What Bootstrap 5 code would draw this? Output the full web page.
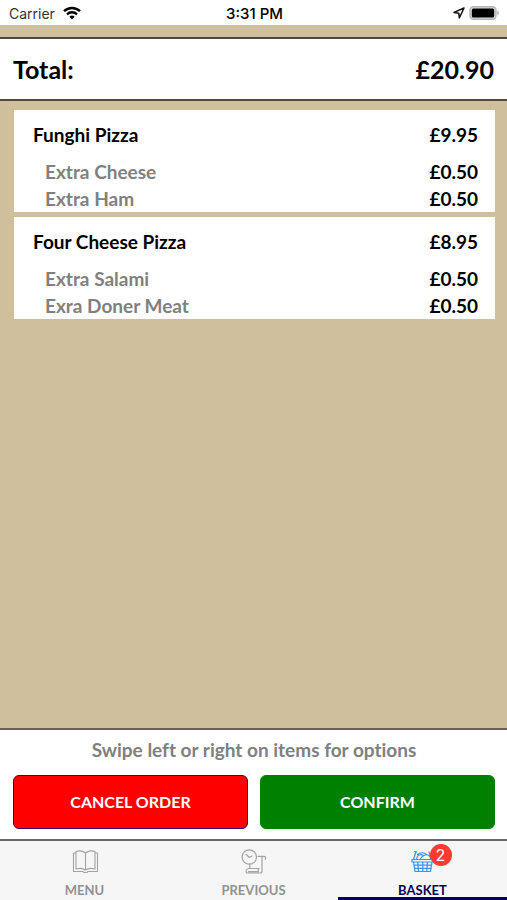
<!DOCTYPE html>
<html lang="en">
<head>
<meta charset="utf-8">
<meta name="viewport" content="width=device-width, initial-scale=1">
<title>Basket</title>
<link rel="stylesheet" href="https://cdn.jsdelivr.net/npm/bootstrap@5.3.0/dist/css/bootstrap.min.css">
<style>
body { font-family: Lato, "Open Sans", sans-serif; font-variant-ligatures: none; background: #d0bf9d; color: #000; font-weight: 700; }
.status-bar { height: 25px; font: 500 14px/25px Inter, "Liberation Sans", sans-serif; padding: 1px 7px 0 9px; }
.status-carrier { font-weight: 400; color: #333; }
.status-time { font-size: 15px; }
.total-bar { margin-top: 12px; border-top: 2px solid #50483f; border-bottom: 2px solid #50483f; padding: 0 13px; font-size: 25px; line-height: 60px; }
.order-list { padding: 9px 12px 9px 14px; gap: 5px; }
.order-item { padding: 11px 17px 0 19px; font-size: 19px; line-height: 28px; }
.order-item .order-name { margin-bottom: 9px; }
.order-extra { padding-left: 12px; line-height: 27px; }
.order-extra dt { color: #808080; }
.actions { border-top: 2px solid #666059; border-bottom: 2px solid #666; padding: 7px 12px 10px 13px; }
.hint { color: #808080; font-size: 19px; line-height: 26px; margin-bottom: 12px; }
.action-row { gap: 12px; }
.btn-order { height: 54px; border-radius: 6px; font-size: 16px; font-weight: 700; color: #fff; }
.btn-cancel, .btn-cancel:hover { background: #f00; border: 1px solid #3c0064; color: #fff; }
.btn-confirm, .btn-confirm:hover { background: #008000; border: 1px solid #008000; color: #fff; }
.tab-bar { background: #f6f6f6; }
.tab-bar a { height: 59px; padding-top: 7px; border-bottom: 3px solid transparent; color: #929292; font-size: 13px; line-height: 16px; text-decoration: none; }
.tab-bar a.active { color: #080058; border-color: #080058; }
.tab-icon { width: 28px; height: 28px; margin-bottom: 6px; }
.tab-icon svg { display: block; }
.tab-count { top: -4px; left: 21px; width: 22px; height: 22px; background: #ff3b30; color: #fff; font: 400 16px/22px Inter, sans-serif; }
</style>
<script src="https://cdn.jsdelivr.net/npm/bootstrap@5.3.0/dist/js/bootstrap.bundle.min.js"></script>
</head>
<body class="d-flex flex-column min-vh-100">
<header>
  <div class="status-bar bg-white d-flex align-items-center">
    <div class="status-carrier col d-flex align-items-center gap-2">Carrier
      <svg width="18" height="14" viewBox="0 0 18 14" fill="none" stroke="#000" stroke-width="2.4" aria-hidden="true"><path d="M1 5.2a11.5 11.5 0 0 1 16 0M4 8.3a7.2 7.2 0 0 1 10 0"/><path d="M9 13.5l-2.6-2.7a3.7 3.7 0 0 1 5.2 0z" fill="#000" stroke="none"/></svg>
    </div>
    <div class="status-time">3:31 PM</div>
    <div class="col d-flex justify-content-end align-items-center gap-1">
      <svg width="12" height="12" viewBox="0 0 12 12" fill="none" stroke="#111" stroke-width="1.5" stroke-linejoin="round" aria-hidden="true"><path d="M11 1L1 5.400l4.800.800.500 4.800z"/></svg>
      <svg width="31" height="14" viewBox="0 0 31 14" aria-hidden="true"><rect x="1" y=".8" width="26" height="12.4" rx="3.500" fill="#ddd" stroke="#b5b5b5" stroke-width="1.4"/><rect x="2.8" y="2.4" width="22.4" height="9.2" rx="1.500"/><path d="M28.400 4.500q3 2.500 0 5z" fill="#aaa"/></svg>
    </div>
  </div>
  <div class="total-bar bg-white d-flex justify-content-between"><span>Total:</span><span>£20.90</span></div>
</header>

<main class="order-list d-flex flex-column flex-grow-1">
  <section class="order-item bg-white">
    <dl class="m-0">
      <div class="order-name d-flex justify-content-between"><dt>Funghi Pizza</dt><dd class="m-0">£9.95</dd></div>
      <div class="order-extra d-flex justify-content-between"><dt>Extra Cheese</dt><dd class="m-0">£0.50</dd></div>
      <div class="order-extra d-flex justify-content-between"><dt>Extra Ham</dt><dd class="m-0">£0.50</dd></div>
    </dl>
  </section>
  <section class="order-item bg-white">
    <dl class="m-0">
      <div class="order-name d-flex justify-content-between"><dt>Four Cheese Pizza</dt><dd class="m-0">£8.95</dd></div>
      <div class="order-extra d-flex justify-content-between"><dt>Extra Salami</dt><dd class="m-0">£0.50</dd></div>
      <div class="order-extra d-flex justify-content-between"><dt>Exra Doner Meat</dt><dd class="m-0">£0.50</dd></div>
    </dl>
  </section>
</main>

<footer>
  <div class="actions bg-white">
    <p class="hint text-center">Swipe left or right on items for options</p>
    <div class="action-row d-flex">
      <button type="button" class="btn btn-order btn-cancel col">CANCEL ORDER</button>
      <button type="button" class="btn btn-order btn-confirm col">CONFIRM</button>
    </div>
  </div>
  <nav class="tab-bar d-flex" aria-label="Main">
    <a href="#menu" class="col d-flex flex-column align-items-center">
      <span class="tab-icon"><svg width="28" height="28" viewBox="0 0 28 28" fill="none" stroke="#a3a3a3" stroke-width="1.1" stroke-linejoin="round" aria-hidden="true"><path d="M14.500 5C12 3 8 2.600 5 3.500V21c3.500-1 7-.8 9.500 1 2.500-1.800 6-2 9.500-1V3.500C21 2.600 17 3 14.500 5zM14.500 5V22M5 5H2.500v18.500h9.500l1 1h3l1-1h9.500V5H24"/></svg></span>
      MENU
    </a>
    <a href="#previous" class="col d-flex flex-column align-items-center">
      <span class="tab-icon"><svg width="28" height="28" viewBox="0 0 28 28" fill="none" stroke="#a3a3a3" stroke-width="1.2" stroke-linecap="round" stroke-linejoin="round" aria-hidden="true"><circle cx="9.300" cy="9" r="7.200"/><path d="M6 6.300l3.300 3.200L12 8M9.800 16.200v4.300M18 8.300h5.500c2.200 0 2.500 1.200 1.800 3M22 8.300V23c0 1.500-.8 2-2 2H7.500c-2 0-2-4 .8-4.500H19c-1 1.200-1 2.200-.5 3.200H8.500"/></svg></span>
      PREVIOUS
    </a>
    <a href="#basket" class="col d-flex flex-column align-items-center active" aria-current="page">
      <span class="tab-icon position-relative"><svg width="28" height="28" viewBox="0 0 28 28" fill="none" stroke="#3594f5" stroke-width="1.2" stroke-linecap="round" stroke-linejoin="round" aria-hidden="true"><path d="M3 11.500h21.500v2.500H3zM4.500 14L6 23.500h15.500L23 14M5.100 17.200h17.300M5.700 20.400h16.200M8.700 14l.8 9.500M13.800 14v9.500M18.500 14l-.8 9.500M4.500 11.500L7 3.500M5.500 3.500l2.500.500M22.500 11.500L20 4M7.500 11c.5-4 4-5.500 7-3.500M11 11.500c1.500-3 5-5.500 8-4.500 2 .7 2.500 2.500 2.500 4M8.500 6.500c3-2.500 7-2.200 9 0"/></svg>
        <span class="tab-count position-absolute rounded-circle text-center">2</span></span>
      BASKET
    </a>
  </nav>
</footer>
</body>
</html>
